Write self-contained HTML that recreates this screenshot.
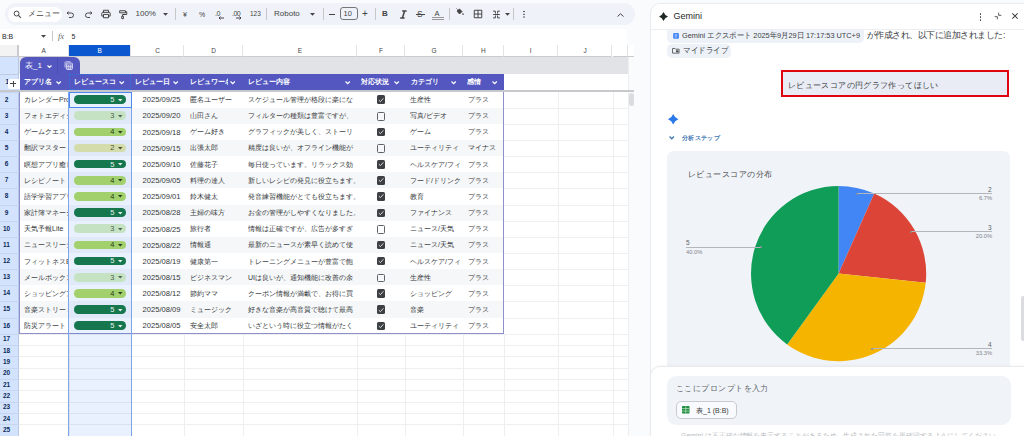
<!DOCTYPE html><html><head><meta charset="utf-8"><style>
*{box-sizing:border-box;margin:0;padding:0}
html,body{width:1024px;height:436px;overflow:hidden;background:#f9fbfd;font-family:"Liberation Sans",sans-serif;color:#1f1f1f}
.a{position:absolute}
.t{position:absolute;white-space:nowrap;line-height:1}
svg{position:absolute;overflow:visible}
</style></head><body>

<div class="a" style="left:5px;top:3px;width:630px;height:22px;border-radius:11px;background:#eff3f9"></div>
<div class="a" style="left:8px;top:6.5px;width:54px;height:15px;border-radius:7.5px;background:#fff"></div>
<svg style="left:13px;top:10px" width="9" height="9" viewBox="0 0 24 24"><circle cx="9.5" cy="9.5" r="6.5" fill="none" stroke="#444" stroke-width="2.6"/><path d="M14.5 14.5 L21 21" stroke="#444" stroke-width="2.8"/></svg>
<div class="t" style="left:28px;top:10px;font-size:7.5px;color:#444">メニュー</div>
<svg style="left:66px;top:10px" width="9" height="9" viewBox="0 0 24 24"><path d="M7 4 L3 8 L7 12 M3 8 H14 a6 6 0 0 1 0 12 H8" fill="none" stroke="#444" stroke-width="2.6"/></svg>
<svg style="left:84px;top:10px" width="9" height="9" viewBox="0 0 24 24"><path d="M17 4 L21 8 L17 12 M21 8 H10 a6 6 0 0 0 0 12 H16" fill="none" stroke="#444" stroke-width="2.6"/></svg>
<svg style="left:101px;top:9px" width="10" height="10" viewBox="0 0 24 24"><path d="M6 8 V3 H18 V8 M4 8 H20 a2 2 0 0 1 2 2 V17 H18 M6 17 H2 V10 a2 2 0 0 1 2 -2 M6 13 H18 V21 H6 Z" fill="none" stroke="#444" stroke-width="2.4"/></svg>
<svg style="left:118px;top:9px" width="10" height="11" viewBox="0 0 24 24"><path d="M4 3 H18 V8 H4 Z M18 5.5 H21 V12 H11 V16 M9 16 H13 V22 H9 Z" fill="none" stroke="#444" stroke-width="2.4"/></svg>
<div class="t" style="left:135.5px;top:10px;font-size:8px;color:#444">100%</div>
<svg style="left:163px;top:12.5px" width="5" height="3" viewBox="0 0 10 6"><path d="M0 0 H10 L5 5.5 Z" fill="#444"/></svg>
<div class="a" style="left:174.5px;top:8px;width:1px;height:12px;background:#c7c7c7"></div>
<div class="t" style="left:183px;top:10.5px;font-size:7px;color:#444">¥</div>
<div class="t" style="left:199px;top:10.5px;font-size:7px;color:#444">%</div>
<div class="t" style="left:215px;top:9.5px;font-size:7px;color:#444;letter-spacing:-0.5px">.0</div>
<svg style="left:218px;top:16px" width="6" height="4" viewBox="0 0 12 8"><path d="M12 4 H2 M5 1 L2 4 L5 7" fill="none" stroke="#444" stroke-width="2"/></svg>
<div class="t" style="left:232px;top:9.5px;font-size:7px;color:#444;letter-spacing:-0.5px">.00</div>
<svg style="left:236px;top:16px" width="6" height="4" viewBox="0 0 12 8"><path d="M0 4 H10 M7 1 L10 4 L7 7" fill="none" stroke="#444" stroke-width="2"/></svg>
<div class="t" style="left:250px;top:10.5px;font-size:6.5px;color:#444">123</div>
<div class="a" style="left:265.5px;top:8px;width:1px;height:12px;background:#c7c7c7"></div>
<div class="t" style="left:274px;top:10px;font-size:8px;color:#444">Roboto</div>
<svg style="left:310px;top:12.5px" width="5" height="3" viewBox="0 0 10 6"><path d="M0 0 H10 L5 5.5 Z" fill="#444"/></svg>
<div class="a" style="left:322.5px;top:8px;width:1px;height:12px;background:#c7c7c7"></div>
<div class="a" style="left:329px;top:13.5px;width:6px;height:1.2px;background:#444"></div>
<div class="a" style="left:339.5px;top:7px;width:18px;height:13px;border:1px solid #747775;border-radius:3px"></div>
<div class="t" style="left:343.5px;top:10px;font-size:7.5px;color:#444">10</div>
<div class="t" style="left:362px;top:8.5px;font-size:10px;color:#444">+</div>
<div class="a" style="left:375px;top:8px;width:1px;height:12px;background:#c7c7c7"></div>
<div class="t" style="left:382px;top:10px;font-size:8px;font-weight:bold;color:#444">B</div>
<svg style="left:399px;top:10px" width="9" height="9" viewBox="0 0 9 9"><path d="M3.2 1 H7.6 M1.2 8 H5.6 M5.6 1 L3.4 8" fill="none" stroke="#444" stroke-width="1.5"/></svg>
<div class="t" style="left:417px;top:9.6px;font-size:8.5px;color:#444">S</div>
<div class="a" style="left:415.5px;top:13.6px;width:9px;height:1px;background:#444"></div>
<div class="t" style="left:434.5px;top:10px;font-size:7.5px;color:#444">A</div>
<div class="a" style="left:432px;top:17.3px;width:12px;height:0.9px;background:#999"></div>
<div class="a" style="left:432px;top:18.9px;width:12px;height:0.9px;background:#999"></div>
<div class="a" style="left:449px;top:8px;width:1px;height:12px;background:#c7c7c7"></div>
<svg style="left:455px;top:8.3px" width="9" height="7.5" viewBox="0 0 18 15"><path d="M3 1 L5 3 M4 6 L9 2 L14 7 L9 12 Z" fill="#444" stroke="#444" stroke-width="1.8" stroke-linejoin="round"/><circle cx="16" cy="12" r="1.7" fill="#444"/></svg>
<svg style="left:473px;top:9px" width="10" height="10" viewBox="0 0 24 24"><path d="M3 3 H21 V21 H3 Z M12 3 V21 M3 12 H21" fill="none" stroke="#444" stroke-width="2.4"/></svg>
<svg style="left:491.5px;top:9.5px" width="9" height="9" viewBox="0 0 24 24"><path d="M3 3 H9 V8 M15 8 V3 H21 M3 21 H9 V16 M15 16 V21 H21 M3 12 H21 M9 9.5 L12 12 L9 14.5 M15 9.5 L12 12 L15 14.5" fill="none" stroke="#444" stroke-width="2.6"/></svg>
<svg style="left:504.5px;top:12.5px" width="5" height="3" viewBox="0 0 10 6"><path d="M0 0 H10 L5 5.5 Z" fill="#444"/></svg>
<div class="a" style="left:513px;top:8px;width:1px;height:12px;background:#c7c7c7"></div>
<div class="a" style="left:523px;top:10.6px;width:1.9px;height:1.9px;background:#444;border-radius:1px;box-shadow:0 2.7px 0 #444,0 5.4px 0 #444"></div>
<svg style="left:617px;top:12.8px" width="7" height="4" viewBox="0 0 14 8"><path d="M1 7 L7 1.5 L13 7" fill="none" stroke="#444" stroke-width="2"/></svg>
<div class="a" style="left:0;top:29px;width:627px;height:16px;background:#fff"></div>
<div class="t" style="left:2px;top:32.5px;font-size:7px;color:#1f1f1f">B:B</div>
<svg style="left:40.5px;top:35px" width="5" height="3" viewBox="0 0 10 6"><path d="M0 0 H10 L5 5.5 Z" fill="#444"/></svg>
<div class="a" style="left:51.5px;top:31px;width:1px;height:10px;background:#c7c7c7"></div>
<div class="t" style="left:58px;top:31.5px;font-size:8.5px;font-style:italic;font-family:'Liberation Serif';color:#666">fx</div>
<div class="t" style="left:71.5px;top:32.5px;font-size:7px;color:#1f1f1f">5</div>
<div class="a" style="left:0;top:44.5px;width:628px;height:391.5px;background:#fff;overflow:hidden" id="grid">
<div class="a" style="left:0;top:0;width:19px;height:12.5px;background:#f3f3f3;border-right:2px solid #c9cbcf;border-bottom:1px solid #c9cbcf"></div>
<div class="a" style="left:19px;top:0;width:49.5px;height:12.5px;background:#fff;border-right:1px solid #e1e3e6;border-bottom:1px solid #c9cbcf"></div>
<div class="t" style="left:19px;width:49.5px;text-align:center;top:3.3px;font-size:6.5px;color:#444">A</div>
<div class="a" style="left:68.5px;top:0;width:62.5px;height:12.5px;background:#0b57d0;border-right:1px solid #e1e3e6;border-bottom:1px solid #c9cbcf"></div>
<div class="t" style="left:68.5px;width:62.5px;text-align:center;top:3.3px;font-size:6.5px;color:#fff">B</div>
<div class="a" style="left:131px;top:0;width:53px;height:12.5px;background:#fff;border-right:1px solid #e1e3e6;border-bottom:1px solid #c9cbcf"></div>
<div class="t" style="left:131px;width:53px;text-align:center;top:3.3px;font-size:6.5px;color:#444">C</div>
<div class="a" style="left:184px;top:0;width:59px;height:12.5px;background:#fff;border-right:1px solid #e1e3e6;border-bottom:1px solid #c9cbcf"></div>
<div class="t" style="left:184px;width:59px;text-align:center;top:3.3px;font-size:6.5px;color:#444">D</div>
<div class="a" style="left:243px;top:0;width:114px;height:12.5px;background:#fff;border-right:1px solid #e1e3e6;border-bottom:1px solid #c9cbcf"></div>
<div class="t" style="left:243px;width:114px;text-align:center;top:3.3px;font-size:6.5px;color:#444">E</div>
<div class="a" style="left:357px;top:0;width:48px;height:12.5px;background:#fff;border-right:1px solid #e1e3e6;border-bottom:1px solid #c9cbcf"></div>
<div class="t" style="left:357px;width:48px;text-align:center;top:3.3px;font-size:6.5px;color:#444">F</div>
<div class="a" style="left:405px;top:0;width:58px;height:12.5px;background:#fff;border-right:1px solid #e1e3e6;border-bottom:1px solid #c9cbcf"></div>
<div class="t" style="left:405px;width:58px;text-align:center;top:3.3px;font-size:6.5px;color:#444">G</div>
<div class="a" style="left:463px;top:0;width:40.5px;height:12.5px;background:#fff;border-right:1px solid #e1e3e6;border-bottom:1px solid #c9cbcf"></div>
<div class="t" style="left:463px;width:40.5px;text-align:center;top:3.3px;font-size:6.5px;color:#444">H</div>
<div class="a" style="left:503.5px;top:0;width:54.200000000000045px;height:12.5px;background:#fff;border-right:1px solid #e1e3e6;border-bottom:1px solid #c9cbcf"></div>
<div class="t" style="left:503.5px;width:54.200000000000045px;text-align:center;top:3.3px;font-size:6.5px;color:#444">I</div>
<div class="a" style="left:557.7px;top:0;width:54.799999999999955px;height:12.5px;background:#fff;border-right:1px solid #e1e3e6;border-bottom:1px solid #c9cbcf"></div>
<div class="t" style="left:557.7px;width:54.799999999999955px;text-align:center;top:3.3px;font-size:6.5px;color:#444">J</div>
<div class="a" style="left:612.5px;top:0;width:15.5px;height:12.5px;background:#fff;border-right:1px solid #e1e3e6;border-bottom:1px solid #c9cbcf"></div>
<div class="a" style="left:0;top:12.5px;width:19px;height:379px;background:#d3e3fd;border-right:1px solid #b7c7e6"></div>
<div class="a" style="left:0;top:29.0px;width:19px;height:1px;background:#bfcbe0"></div>
<div class="t" style="left:0.8px;width:13px;text-align:center;top:34.0px;font-size:6.5px;font-weight:bold;color:#0b2a5c">1</div>
<div class="a" style="left:0;top:47.0px;width:19px;height:0;border-top:1px solid #c6d6f0"></div>
<div class="t" style="left:0;width:13px;text-align:center;top:52.0px;font-size:6.5px;font-weight:bold;color:#0b2a5c">2</div>
<div class="a" style="left:0;top:63.150000000000006px;width:19px;height:0;border-top:1px solid #c6d6f0"></div>
<div class="t" style="left:0;width:13px;text-align:center;top:68.15px;font-size:6.5px;font-weight:bold;color:#0b2a5c">3</div>
<div class="a" style="left:0;top:79.3px;width:19px;height:0;border-top:1px solid #c6d6f0"></div>
<div class="t" style="left:0;width:13px;text-align:center;top:84.3px;font-size:6.5px;font-weight:bold;color:#0b2a5c">4</div>
<div class="a" style="left:0;top:95.44999999999999px;width:19px;height:0;border-top:1px solid #c6d6f0"></div>
<div class="t" style="left:0;width:13px;text-align:center;top:100.44999999999999px;font-size:6.5px;font-weight:bold;color:#0b2a5c">5</div>
<div class="a" style="left:0;top:111.6px;width:19px;height:0;border-top:1px solid #c6d6f0"></div>
<div class="t" style="left:0;width:13px;text-align:center;top:116.6px;font-size:6.5px;font-weight:bold;color:#0b2a5c">6</div>
<div class="a" style="left:0;top:127.75px;width:19px;height:0;border-top:1px solid #c6d6f0"></div>
<div class="t" style="left:0;width:13px;text-align:center;top:132.75px;font-size:6.5px;font-weight:bold;color:#0b2a5c">7</div>
<div class="a" style="left:0;top:143.89999999999998px;width:19px;height:0;border-top:1px solid #c6d6f0"></div>
<div class="t" style="left:0;width:13px;text-align:center;top:148.89999999999998px;font-size:6.5px;font-weight:bold;color:#0b2a5c">8</div>
<div class="a" style="left:0;top:160.04999999999998px;width:19px;height:0;border-top:1px solid #c6d6f0"></div>
<div class="t" style="left:0;width:13px;text-align:center;top:165.04999999999998px;font-size:6.5px;font-weight:bold;color:#0b2a5c">9</div>
<div class="a" style="left:0;top:176.2px;width:19px;height:0;border-top:1px solid #c6d6f0"></div>
<div class="t" style="left:0;width:13px;text-align:center;top:181.2px;font-size:6.5px;font-weight:bold;color:#0b2a5c">10</div>
<div class="a" style="left:0;top:192.35px;width:19px;height:0;border-top:1px solid #c6d6f0"></div>
<div class="t" style="left:0;width:13px;text-align:center;top:197.35px;font-size:6.5px;font-weight:bold;color:#0b2a5c">11</div>
<div class="a" style="left:0;top:208.5px;width:19px;height:0;border-top:1px solid #c6d6f0"></div>
<div class="t" style="left:0;width:13px;text-align:center;top:213.5px;font-size:6.5px;font-weight:bold;color:#0b2a5c">12</div>
<div class="a" style="left:0;top:224.64999999999998px;width:19px;height:0;border-top:1px solid #c6d6f0"></div>
<div class="t" style="left:0;width:13px;text-align:center;top:229.64999999999998px;font-size:6.5px;font-weight:bold;color:#0b2a5c">13</div>
<div class="a" style="left:0;top:240.79999999999995px;width:19px;height:0;border-top:1px solid #c6d6f0"></div>
<div class="t" style="left:0;width:13px;text-align:center;top:245.79999999999995px;font-size:6.5px;font-weight:bold;color:#0b2a5c">14</div>
<div class="a" style="left:0;top:256.95px;width:19px;height:0;border-top:1px solid #c6d6f0"></div>
<div class="t" style="left:0;width:13px;text-align:center;top:261.95px;font-size:6.5px;font-weight:bold;color:#0b2a5c">15</div>
<div class="a" style="left:0;top:273.09999999999997px;width:19px;height:0;border-top:1px solid #c6d6f0"></div>
<div class="t" style="left:0;width:13px;text-align:center;top:278.09999999999997px;font-size:6.5px;font-weight:bold;color:#0b2a5c">16</div>
<div class="a" style="left:0;top:289.25px;width:19px;height:0;border-top:1px solid #c6d6f0"></div>
<div class="t" style="left:0;width:13px;text-align:center;top:291.75px;font-size:6.5px;font-weight:bold;color:#0b2a5c">17</div>
<div class="a" style="left:0;top:300.58px;width:19px;height:0;border-top:1px solid #c6d6f0"></div>
<div class="t" style="left:0;width:13px;text-align:center;top:303.08px;font-size:6.5px;font-weight:bold;color:#0b2a5c">18</div>
<div class="a" style="left:0;top:311.91px;width:19px;height:0;border-top:1px solid #c6d6f0"></div>
<div class="t" style="left:0;width:13px;text-align:center;top:314.41px;font-size:6.5px;font-weight:bold;color:#0b2a5c">19</div>
<div class="a" style="left:0;top:323.24px;width:19px;height:0;border-top:1px solid #c6d6f0"></div>
<div class="t" style="left:0;width:13px;text-align:center;top:325.74px;font-size:6.5px;font-weight:bold;color:#0b2a5c">20</div>
<div class="a" style="left:0;top:334.57px;width:19px;height:0;border-top:1px solid #c6d6f0"></div>
<div class="t" style="left:0;width:13px;text-align:center;top:337.07px;font-size:6.5px;font-weight:bold;color:#0b2a5c">21</div>
<div class="a" style="left:0;top:345.9px;width:19px;height:0;border-top:1px solid #c6d6f0"></div>
<div class="t" style="left:0;width:13px;text-align:center;top:348.4px;font-size:6.5px;font-weight:bold;color:#0b2a5c">22</div>
<div class="a" style="left:0;top:357.23px;width:19px;height:0;border-top:1px solid #c6d6f0"></div>
<div class="t" style="left:0;width:13px;text-align:center;top:359.73px;font-size:6.5px;font-weight:bold;color:#0b2a5c">23</div>
<div class="a" style="left:0;top:368.56px;width:19px;height:0;border-top:1px solid #c6d6f0"></div>
<div class="t" style="left:0;width:13px;text-align:center;top:371.06px;font-size:6.5px;font-weight:bold;color:#0b2a5c">24</div>
<div class="a" style="left:0;top:379.89px;width:19px;height:0;border-top:1px solid #c6d6f0"></div>
<div class="t" style="left:0;width:13px;text-align:center;top:382.39px;font-size:6.5px;font-weight:bold;color:#0b2a5c">25</div>
<div class="a" style="left:0;top:391.22px;width:19px;height:0;border-top:1px solid #c6d6f0"></div>
<div class="t" style="left:0;width:13px;text-align:center;top:393.72px;font-size:6.5px;font-weight:bold;color:#0b2a5c">26</div>
<div class="a" style="left:19px;top:12.5px;width:609px;height:17px;background:#e1e3e6"></div>
<div class="a" style="left:19.5px;top:12.5px;width:60.5px;height:17px;background:#5357bf;border-radius:6px 6px 0 0"></div>
<div class="a" style="left:56.8px;top:13.5px;width:1.3px;height:16px;background:#4a4eb2"></div>
<div class="t" style="left:25px;top:17.0px;font-size:8px;color:#fff">表_1</div>
<svg style="left:46.5px;top:20.0px" width="5" height="3.0" viewBox="0 0 10 6"><path d="M1 1 L5 5 L9 1" fill="none" stroke="#fff" stroke-width="2.3"/></svg>
<svg style="left:64px;top:16.700000000000003px" width="9.2" height="9" viewBox="0 0 24 24"><path d="M2.5 17 V4 a2 2 0 0 1 2 -2 H17" fill="none" stroke="#e8e9f8" stroke-width="2"/><rect x="6" y="5.5" width="16" height="17" rx="2" fill="none" stroke="#f2f2fb" stroke-width="2.2"/><path d="M6 10.5 H22 M6 14.5 H22 M6 18.5 H22 M11.3 10.5 V22.5 M16.6 10.5 V22.5" stroke="#f2f2fb" stroke-width="1.6"/></svg>
<div class="a" style="left:19.5px;top:29.5px;width:484.0px;height:16.0px;background:#5357bf"></div>
<div class="t" style="left:24px;top:33.1px;font-size:7px;font-weight:bold;color:#fff">アプリ名</div>
<div class="a" style="left:54px;top:32.5px;width:9px;height:10px;background:#5357bf"></div>
<svg style="left:56.3px;top:36.7px" width="5.4" height="3.24" viewBox="0 0 10 6"><path d="M1 1 L5 5 L9 1" fill="none" stroke="#fff" stroke-width="2.3"/></svg>
<div class="t" style="left:74px;top:33.1px;font-size:7px;font-weight:bold;color:#fff">レビュースコ</div>
<div class="a" style="left:116.5px;top:32.5px;width:9px;height:10px;background:#5357bf"></div>
<svg style="left:118.8px;top:36.7px" width="5.4" height="3.24" viewBox="0 0 10 6"><path d="M1 1 L5 5 L9 1" fill="none" stroke="#fff" stroke-width="2.3"/></svg>
<div class="t" style="left:135px;top:33.1px;font-size:7px;font-weight:bold;color:#fff">レビュー日</div>
<div class="a" style="left:170.2px;top:32.5px;width:9px;height:10px;background:#5357bf"></div>
<svg style="left:172.5px;top:36.7px" width="5.4" height="3.24" viewBox="0 0 10 6"><path d="M1 1 L5 5 L9 1" fill="none" stroke="#fff" stroke-width="2.3"/></svg>
<div class="t" style="left:190px;top:33.1px;font-size:7px;font-weight:bold;color:#fff">レビュワー名</div>
<div class="a" style="left:227.5px;top:32.5px;width:9px;height:10px;background:#5357bf"></div>
<svg style="left:229.8px;top:36.7px" width="5.4" height="3.24" viewBox="0 0 10 6"><path d="M1 1 L5 5 L9 1" fill="none" stroke="#fff" stroke-width="2.3"/></svg>
<div class="t" style="left:248px;top:33.1px;font-size:7px;font-weight:bold;color:#fff">レビュー内容</div>
<div class="a" style="left:342.5px;top:32.5px;width:9px;height:10px;background:#5357bf"></div>
<svg style="left:344.8px;top:36.7px" width="5.4" height="3.24" viewBox="0 0 10 6"><path d="M1 1 L5 5 L9 1" fill="none" stroke="#fff" stroke-width="2.3"/></svg>
<div class="t" style="left:360.8px;top:33.1px;font-size:7px;font-weight:bold;color:#fff">対応状況</div>
<div class="a" style="left:391.8px;top:32.5px;width:9px;height:10px;background:#5357bf"></div>
<svg style="left:394.1px;top:36.7px" width="5.4" height="3.24" viewBox="0 0 10 6"><path d="M1 1 L5 5 L9 1" fill="none" stroke="#fff" stroke-width="2.3"/></svg>
<div class="t" style="left:410.6px;top:33.1px;font-size:7px;font-weight:bold;color:#fff">カテゴリ</div>
<div class="a" style="left:448.8px;top:32.5px;width:9px;height:10px;background:#5357bf"></div>
<svg style="left:451.1px;top:36.7px" width="5.4" height="3.24" viewBox="0 0 10 6"><path d="M1 1 L5 5 L9 1" fill="none" stroke="#fff" stroke-width="2.3"/></svg>
<div class="t" style="left:467px;top:33.1px;font-size:7px;font-weight:bold;color:#fff">感情</div>
<div class="a" style="left:489.8px;top:32.5px;width:9px;height:10px;background:#5357bf"></div>
<svg style="left:492.1px;top:36.7px" width="5.4" height="3.24" viewBox="0 0 10 6"><path d="M1 1 L5 5 L9 1" fill="none" stroke="#fff" stroke-width="2.3"/></svg>
<div class="a" style="left:69px;top:29.5px;width:62px;height:16.0px;border:1px dotted #2f74e6"></div>
<div class="a" style="left:0px;top:45.099999999999994px;width:628px;height:2.5px;background:#c6c8cb"></div>
<div class="a" style="left:8px;top:34.5px;width:11px;height:9.7px;background:#fff;border-radius:2px 0 0 2px"></div>
<div class="a" style="left:10.3px;top:38.8px;width:6px;height:1px;background:#444"></div>
<div class="a" style="left:12.8px;top:36.3px;width:1px;height:6px;background:#444"></div>
<div class="a" style="left:19.5px;top:47.0px;width:483.5px;height:16.349999999999998px;background:#fff"></div>
<div class="t" style="left:24px;top:51.5px;width:45px;overflow:hidden;font-size:7px;color:#34373b">カレンダーPro</div>
<div class="t" style="left:142.5px;top:51.8px;font-size:7.6px;color:#34373b">2025/09/25</div>
<div class="t" style="left:190px;top:51.5px;width:53px;overflow:hidden;font-size:7px;color:#34373b">匿名ユーザー</div>
<div class="t" style="left:248px;top:51.5px;width:109px;overflow:hidden;font-size:7px;color:#34373b">スケジュール管理が格段に楽にな</div>
<div class="t" style="left:410px;top:51.5px;width:53px;overflow:hidden;font-size:7px;color:#34373b">生産性</div>
<div class="t" style="left:467.5px;top:51.5px;font-size:7px;color:#34373b">プラス</div>
<div class="a" style="left:376.6px;top:50.975px;width:8.5px;height:8.5px;background:#3c4043;border-radius:1.5px"></div>
<svg style="left:377.8px;top:52.075px" width="6.2" height="6.2" viewBox="0 0 24 24"><path d="M3 12 L9.5 18 L21 5" fill="none" stroke="#fff" stroke-width="3"/></svg>
<div class="a" style="left:19.5px;top:63.150000000000006px;width:483.5px;height:16.349999999999998px;background:#f6f7f9"></div>
<div class="t" style="left:24px;top:67.65px;width:45px;overflow:hidden;font-size:7px;color:#34373b">フォトエディター</div>
<div class="t" style="left:142.5px;top:67.95px;font-size:7.6px;color:#34373b">2025/09/20</div>
<div class="t" style="left:190px;top:67.65px;width:53px;overflow:hidden;font-size:7px;color:#34373b">山田さん</div>
<div class="t" style="left:248px;top:67.65px;width:109px;overflow:hidden;font-size:7px;color:#34373b">フィルターの種類は豊富ですが、</div>
<div class="t" style="left:410px;top:67.65px;width:53px;overflow:hidden;font-size:7px;color:#34373b">写真/ビデオ</div>
<div class="t" style="left:467.5px;top:67.65px;font-size:7px;color:#34373b">プラス</div>
<div class="a" style="left:376.6px;top:67.525px;width:8.5px;height:8.7px;border:1.5px solid #5f6368;border-radius:1.5px"></div>
<div class="a" style="left:19.5px;top:79.3px;width:483.5px;height:16.349999999999998px;background:#fff"></div>
<div class="t" style="left:24px;top:83.8px;width:45px;overflow:hidden;font-size:7px;color:#34373b">ゲームクエスト</div>
<div class="t" style="left:142.5px;top:84.1px;font-size:7.6px;color:#34373b">2025/09/18</div>
<div class="t" style="left:190px;top:83.8px;width:53px;overflow:hidden;font-size:7px;color:#34373b">ゲーム好き</div>
<div class="t" style="left:248px;top:83.8px;width:109px;overflow:hidden;font-size:7px;color:#34373b">グラフィックが美しく、ストーリ</div>
<div class="t" style="left:410px;top:83.8px;width:53px;overflow:hidden;font-size:7px;color:#34373b">ゲーム</div>
<div class="t" style="left:467.5px;top:83.8px;font-size:7px;color:#34373b">プラス</div>
<div class="a" style="left:376.6px;top:83.275px;width:8.5px;height:8.5px;background:#3c4043;border-radius:1.5px"></div>
<svg style="left:377.8px;top:84.375px" width="6.2" height="6.2" viewBox="0 0 24 24"><path d="M3 12 L9.5 18 L21 5" fill="none" stroke="#fff" stroke-width="3"/></svg>
<div class="a" style="left:19.5px;top:95.44999999999999px;width:483.5px;height:16.349999999999998px;background:#f6f7f9"></div>
<div class="t" style="left:24px;top:99.94999999999999px;width:45px;overflow:hidden;font-size:7px;color:#34373b">翻訳マスター</div>
<div class="t" style="left:142.5px;top:100.24999999999999px;font-size:7.6px;color:#34373b">2025/09/15</div>
<div class="t" style="left:190px;top:99.94999999999999px;width:53px;overflow:hidden;font-size:7px;color:#34373b">出張太郎</div>
<div class="t" style="left:248px;top:99.94999999999999px;width:109px;overflow:hidden;font-size:7px;color:#34373b">精度は良いが、オフライン機能が</div>
<div class="t" style="left:410px;top:99.94999999999999px;width:53px;overflow:hidden;font-size:7px;color:#34373b">ユーティリティ</div>
<div class="t" style="left:467.5px;top:99.94999999999999px;font-size:7px;color:#34373b">マイナス</div>
<div class="a" style="left:376.6px;top:99.82499999999999px;width:8.5px;height:8.7px;border:1.5px solid #5f6368;border-radius:1.5px"></div>
<div class="a" style="left:19.5px;top:111.6px;width:483.5px;height:16.349999999999998px;background:#fff"></div>
<div class="t" style="left:24px;top:116.1px;width:45px;overflow:hidden;font-size:7px;color:#34373b">瞑想アプリ癒し</div>
<div class="t" style="left:142.5px;top:116.39999999999999px;font-size:7.6px;color:#34373b">2025/09/10</div>
<div class="t" style="left:190px;top:116.1px;width:53px;overflow:hidden;font-size:7px;color:#34373b">佐藤花子</div>
<div class="t" style="left:248px;top:116.1px;width:109px;overflow:hidden;font-size:7px;color:#34373b">毎日使っています。リラックス効</div>
<div class="t" style="left:410px;top:116.1px;width:53px;overflow:hidden;font-size:7px;color:#34373b">ヘルスケア/フィ</div>
<div class="t" style="left:467.5px;top:116.1px;font-size:7px;color:#34373b">プラス</div>
<div class="a" style="left:376.6px;top:115.575px;width:8.5px;height:8.5px;background:#3c4043;border-radius:1.5px"></div>
<svg style="left:377.8px;top:116.675px" width="6.2" height="6.2" viewBox="0 0 24 24"><path d="M3 12 L9.5 18 L21 5" fill="none" stroke="#fff" stroke-width="3"/></svg>
<div class="a" style="left:19.5px;top:127.75px;width:483.5px;height:16.349999999999998px;background:#f6f7f9"></div>
<div class="t" style="left:24px;top:132.25px;width:45px;overflow:hidden;font-size:7px;color:#34373b">レシピノート</div>
<div class="t" style="left:142.5px;top:132.55px;font-size:7.6px;color:#34373b">2025/09/05</div>
<div class="t" style="left:190px;top:132.25px;width:53px;overflow:hidden;font-size:7px;color:#34373b">料理の達人</div>
<div class="t" style="left:248px;top:132.25px;width:109px;overflow:hidden;font-size:7px;color:#34373b">新しいレシピの発見に役立ちます。</div>
<div class="t" style="left:410px;top:132.25px;width:53px;overflow:hidden;font-size:7px;color:#34373b">フード/ドリンク</div>
<div class="t" style="left:467.5px;top:132.25px;font-size:7px;color:#34373b">プラス</div>
<div class="a" style="left:376.6px;top:131.725px;width:8.5px;height:8.5px;background:#3c4043;border-radius:1.5px"></div>
<svg style="left:377.8px;top:132.825px" width="6.2" height="6.2" viewBox="0 0 24 24"><path d="M3 12 L9.5 18 L21 5" fill="none" stroke="#fff" stroke-width="3"/></svg>
<div class="a" style="left:19.5px;top:143.89999999999998px;width:483.5px;height:16.349999999999998px;background:#fff"></div>
<div class="t" style="left:24px;top:148.39999999999998px;width:45px;overflow:hidden;font-size:7px;color:#34373b">語学学習アプリ</div>
<div class="t" style="left:142.5px;top:148.7px;font-size:7.6px;color:#34373b">2025/09/01</div>
<div class="t" style="left:190px;top:148.39999999999998px;width:53px;overflow:hidden;font-size:7px;color:#34373b">鈴木健太</div>
<div class="t" style="left:248px;top:148.39999999999998px;width:109px;overflow:hidden;font-size:7px;color:#34373b">発音練習機能がとても役立ちます。</div>
<div class="t" style="left:410px;top:148.39999999999998px;width:53px;overflow:hidden;font-size:7px;color:#34373b">教育</div>
<div class="t" style="left:467.5px;top:148.39999999999998px;font-size:7px;color:#34373b">プラス</div>
<div class="a" style="left:376.6px;top:147.87499999999997px;width:8.5px;height:8.5px;background:#3c4043;border-radius:1.5px"></div>
<svg style="left:377.8px;top:148.97499999999997px" width="6.2" height="6.2" viewBox="0 0 24 24"><path d="M3 12 L9.5 18 L21 5" fill="none" stroke="#fff" stroke-width="3"/></svg>
<div class="a" style="left:19.5px;top:160.04999999999998px;width:483.5px;height:16.349999999999998px;background:#f6f7f9"></div>
<div class="t" style="left:24px;top:164.54999999999998px;width:45px;overflow:hidden;font-size:7px;color:#34373b">家計簿マネージャー</div>
<div class="t" style="left:142.5px;top:164.85px;font-size:7.6px;color:#34373b">2025/08/28</div>
<div class="t" style="left:190px;top:164.54999999999998px;width:53px;overflow:hidden;font-size:7px;color:#34373b">主婦の味方</div>
<div class="t" style="left:248px;top:164.54999999999998px;width:109px;overflow:hidden;font-size:7px;color:#34373b">お金の管理がしやすくなりました。</div>
<div class="t" style="left:410px;top:164.54999999999998px;width:53px;overflow:hidden;font-size:7px;color:#34373b">ファイナンス</div>
<div class="t" style="left:467.5px;top:164.54999999999998px;font-size:7px;color:#34373b">プラス</div>
<div class="a" style="left:376.6px;top:164.02499999999998px;width:8.5px;height:8.5px;background:#3c4043;border-radius:1.5px"></div>
<svg style="left:377.8px;top:165.12499999999997px" width="6.2" height="6.2" viewBox="0 0 24 24"><path d="M3 12 L9.5 18 L21 5" fill="none" stroke="#fff" stroke-width="3"/></svg>
<div class="a" style="left:19.5px;top:176.2px;width:483.5px;height:16.349999999999998px;background:#fff"></div>
<div class="t" style="left:24px;top:180.7px;width:45px;overflow:hidden;font-size:7px;color:#34373b">天気予報Lite</div>
<div class="t" style="left:142.5px;top:181.0px;font-size:7.6px;color:#34373b">2025/08/25</div>
<div class="t" style="left:190px;top:180.7px;width:53px;overflow:hidden;font-size:7px;color:#34373b">旅行者</div>
<div class="t" style="left:248px;top:180.7px;width:109px;overflow:hidden;font-size:7px;color:#34373b">情報は正確ですが、広告が多すぎ</div>
<div class="t" style="left:410px;top:180.7px;width:53px;overflow:hidden;font-size:7px;color:#34373b">ニュース/天気</div>
<div class="t" style="left:467.5px;top:180.7px;font-size:7px;color:#34373b">プラス</div>
<div class="a" style="left:376.6px;top:180.575px;width:8.5px;height:8.7px;border:1.5px solid #5f6368;border-radius:1.5px"></div>
<div class="a" style="left:19.5px;top:192.35px;width:483.5px;height:16.349999999999998px;background:#f6f7f9"></div>
<div class="t" style="left:24px;top:196.85px;width:45px;overflow:hidden;font-size:7px;color:#34373b">ニュースリーダー</div>
<div class="t" style="left:142.5px;top:197.15px;font-size:7.6px;color:#34373b">2025/08/22</div>
<div class="t" style="left:190px;top:196.85px;width:53px;overflow:hidden;font-size:7px;color:#34373b">情報通</div>
<div class="t" style="left:248px;top:196.85px;width:109px;overflow:hidden;font-size:7px;color:#34373b">最新のニュースが素早く読めて便</div>
<div class="t" style="left:410px;top:196.85px;width:53px;overflow:hidden;font-size:7px;color:#34373b">ニュース/天気</div>
<div class="t" style="left:467.5px;top:196.85px;font-size:7px;color:#34373b">プラス</div>
<div class="a" style="left:376.6px;top:196.325px;width:8.5px;height:8.5px;background:#3c4043;border-radius:1.5px"></div>
<svg style="left:377.8px;top:197.42499999999998px" width="6.2" height="6.2" viewBox="0 0 24 24"><path d="M3 12 L9.5 18 L21 5" fill="none" stroke="#fff" stroke-width="3"/></svg>
<div class="a" style="left:19.5px;top:208.5px;width:483.5px;height:16.349999999999998px;background:#fff"></div>
<div class="t" style="left:24px;top:213.0px;width:45px;overflow:hidden;font-size:7px;color:#34373b">フィットネスBody</div>
<div class="t" style="left:142.5px;top:213.3px;font-size:7.6px;color:#34373b">2025/08/19</div>
<div class="t" style="left:190px;top:213.0px;width:53px;overflow:hidden;font-size:7px;color:#34373b">健康第一</div>
<div class="t" style="left:248px;top:213.0px;width:109px;overflow:hidden;font-size:7px;color:#34373b">トレーニングメニューが豊富で飽</div>
<div class="t" style="left:410px;top:213.0px;width:53px;overflow:hidden;font-size:7px;color:#34373b">ヘルスケア/フィ</div>
<div class="t" style="left:467.5px;top:213.0px;font-size:7px;color:#34373b">プラス</div>
<div class="a" style="left:376.6px;top:212.475px;width:8.5px;height:8.5px;background:#3c4043;border-radius:1.5px"></div>
<svg style="left:377.8px;top:213.575px" width="6.2" height="6.2" viewBox="0 0 24 24"><path d="M3 12 L9.5 18 L21 5" fill="none" stroke="#fff" stroke-width="3"/></svg>
<div class="a" style="left:19.5px;top:224.64999999999998px;width:483.5px;height:16.349999999999998px;background:#f6f7f9"></div>
<div class="t" style="left:24px;top:229.14999999999998px;width:45px;overflow:hidden;font-size:7px;color:#34373b">メールボックス</div>
<div class="t" style="left:142.5px;top:229.45px;font-size:7.6px;color:#34373b">2025/08/15</div>
<div class="t" style="left:190px;top:229.14999999999998px;width:53px;overflow:hidden;font-size:7px;color:#34373b">ビジネスマン</div>
<div class="t" style="left:248px;top:229.14999999999998px;width:109px;overflow:hidden;font-size:7px;color:#34373b">UIは良いが、通知機能に改善の余</div>
<div class="t" style="left:410px;top:229.14999999999998px;width:53px;overflow:hidden;font-size:7px;color:#34373b">生産性</div>
<div class="t" style="left:467.5px;top:229.14999999999998px;font-size:7px;color:#34373b">プラス</div>
<div class="a" style="left:376.6px;top:229.02499999999998px;width:8.5px;height:8.7px;border:1.5px solid #5f6368;border-radius:1.5px"></div>
<div class="a" style="left:19.5px;top:240.79999999999995px;width:483.5px;height:16.349999999999998px;background:#fff"></div>
<div class="t" style="left:24px;top:245.29999999999995px;width:45px;overflow:hidden;font-size:7px;color:#34373b">ショッピングアプリ</div>
<div class="t" style="left:142.5px;top:245.59999999999997px;font-size:7.6px;color:#34373b">2025/08/12</div>
<div class="t" style="left:190px;top:245.29999999999995px;width:53px;overflow:hidden;font-size:7px;color:#34373b">節約ママ</div>
<div class="t" style="left:248px;top:245.29999999999995px;width:109px;overflow:hidden;font-size:7px;color:#34373b">クーポン情報が満載で、お得に買</div>
<div class="t" style="left:410px;top:245.29999999999995px;width:53px;overflow:hidden;font-size:7px;color:#34373b">ショッピング</div>
<div class="t" style="left:467.5px;top:245.29999999999995px;font-size:7px;color:#34373b">プラス</div>
<div class="a" style="left:376.6px;top:244.77499999999995px;width:8.5px;height:8.5px;background:#3c4043;border-radius:1.5px"></div>
<svg style="left:377.8px;top:245.87499999999994px" width="6.2" height="6.2" viewBox="0 0 24 24"><path d="M3 12 L9.5 18 L21 5" fill="none" stroke="#fff" stroke-width="3"/></svg>
<div class="a" style="left:19.5px;top:256.95px;width:483.5px;height:16.349999999999998px;background:#f6f7f9"></div>
<div class="t" style="left:24px;top:261.45px;width:45px;overflow:hidden;font-size:7px;color:#34373b">音楽ストリーミング</div>
<div class="t" style="left:142.5px;top:261.75px;font-size:7.6px;color:#34373b">2025/08/09</div>
<div class="t" style="left:190px;top:261.45px;width:53px;overflow:hidden;font-size:7px;color:#34373b">ミュージック</div>
<div class="t" style="left:248px;top:261.45px;width:109px;overflow:hidden;font-size:7px;color:#34373b">好きな音楽が高音質で聴けて最高</div>
<div class="t" style="left:410px;top:261.45px;width:53px;overflow:hidden;font-size:7px;color:#34373b">音楽</div>
<div class="t" style="left:467.5px;top:261.45px;font-size:7px;color:#34373b">プラス</div>
<div class="a" style="left:376.6px;top:260.92499999999995px;width:8.5px;height:8.5px;background:#3c4043;border-radius:1.5px"></div>
<svg style="left:377.8px;top:262.025px" width="6.2" height="6.2" viewBox="0 0 24 24"><path d="M3 12 L9.5 18 L21 5" fill="none" stroke="#fff" stroke-width="3"/></svg>
<div class="a" style="left:19.5px;top:273.09999999999997px;width:483.5px;height:16.349999999999998px;background:#fff"></div>
<div class="t" style="left:24px;top:277.59999999999997px;width:45px;overflow:hidden;font-size:7px;color:#34373b">防災アラート</div>
<div class="t" style="left:142.5px;top:277.9px;font-size:7.6px;color:#34373b">2025/08/05</div>
<div class="t" style="left:190px;top:277.59999999999997px;width:53px;overflow:hidden;font-size:7px;color:#34373b">安全太郎</div>
<div class="t" style="left:248px;top:277.59999999999997px;width:109px;overflow:hidden;font-size:7px;color:#34373b">いざという時に役立つ情報がたく</div>
<div class="t" style="left:410px;top:277.59999999999997px;width:53px;overflow:hidden;font-size:7px;color:#34373b">ユーティリティ</div>
<div class="t" style="left:467.5px;top:277.59999999999997px;font-size:7px;color:#34373b">プラス</div>
<div class="a" style="left:376.6px;top:277.07499999999993px;width:8.5px;height:8.5px;background:#3c4043;border-radius:1.5px"></div>
<svg style="left:377.8px;top:278.17499999999995px" width="6.2" height="6.2" viewBox="0 0 24 24"><path d="M3 12 L9.5 18 L21 5" fill="none" stroke="#fff" stroke-width="3"/></svg>
<div class="a" style="left:19px;top:47.5px;width:484.8px;height:242.25px;border:1px solid #8e90c9;border-top:none"></div>
<div class="a" style="left:19px;top:289.25px;width:609px;height:1px;background:#efefef"></div>
<div class="a" style="left:19px;top:300.58px;width:609px;height:1px;background:#efefef"></div>
<div class="a" style="left:19px;top:311.91px;width:609px;height:1px;background:#efefef"></div>
<div class="a" style="left:19px;top:323.24px;width:609px;height:1px;background:#efefef"></div>
<div class="a" style="left:19px;top:334.57px;width:609px;height:1px;background:#efefef"></div>
<div class="a" style="left:19px;top:345.9px;width:609px;height:1px;background:#efefef"></div>
<div class="a" style="left:19px;top:357.23px;width:609px;height:1px;background:#efefef"></div>
<div class="a" style="left:19px;top:368.56px;width:609px;height:1px;background:#efefef"></div>
<div class="a" style="left:19px;top:379.89px;width:609px;height:1px;background:#efefef"></div>
<div class="a" style="left:19px;top:391.22px;width:609px;height:1px;background:#efefef"></div>
<div class="a" style="left:19px;top:402.55px;width:609px;height:1px;background:#efefef"></div>
<div class="a" style="left:68.5px;top:289.25px;width:1px;height:200px;background:#efefef"></div>
<div class="a" style="left:131px;top:289.25px;width:1px;height:200px;background:#efefef"></div>
<div class="a" style="left:184px;top:289.25px;width:1px;height:200px;background:#efefef"></div>
<div class="a" style="left:243px;top:289.25px;width:1px;height:200px;background:#efefef"></div>
<div class="a" style="left:357px;top:289.25px;width:1px;height:200px;background:#efefef"></div>
<div class="a" style="left:405px;top:289.25px;width:1px;height:200px;background:#efefef"></div>
<div class="a" style="left:463px;top:289.25px;width:1px;height:200px;background:#efefef"></div>
<div class="a" style="left:503.5px;top:289.25px;width:1px;height:200px;background:#efefef"></div>
<div class="a" style="left:557.7px;top:289.25px;width:1px;height:200px;background:#efefef"></div>
<div class="a" style="left:612.5px;top:289.25px;width:1px;height:200px;background:#efefef"></div>
<div class="a" style="left:628px;top:289.25px;width:1px;height:200px;background:#efefef"></div>
<div class="a" style="left:503.5px;top:63.150000000000006px;width:124.5px;height:1px;background:#efefef"></div>
<div class="a" style="left:503.5px;top:79.3px;width:124.5px;height:1px;background:#efefef"></div>
<div class="a" style="left:503.5px;top:95.44999999999999px;width:124.5px;height:1px;background:#efefef"></div>
<div class="a" style="left:503.5px;top:111.6px;width:124.5px;height:1px;background:#efefef"></div>
<div class="a" style="left:503.5px;top:127.75px;width:124.5px;height:1px;background:#efefef"></div>
<div class="a" style="left:503.5px;top:143.89999999999998px;width:124.5px;height:1px;background:#efefef"></div>
<div class="a" style="left:503.5px;top:160.04999999999998px;width:124.5px;height:1px;background:#efefef"></div>
<div class="a" style="left:503.5px;top:176.2px;width:124.5px;height:1px;background:#efefef"></div>
<div class="a" style="left:503.5px;top:192.35px;width:124.5px;height:1px;background:#efefef"></div>
<div class="a" style="left:503.5px;top:208.5px;width:124.5px;height:1px;background:#efefef"></div>
<div class="a" style="left:503.5px;top:224.64999999999998px;width:124.5px;height:1px;background:#efefef"></div>
<div class="a" style="left:503.5px;top:240.79999999999995px;width:124.5px;height:1px;background:#efefef"></div>
<div class="a" style="left:503.5px;top:256.95px;width:124.5px;height:1px;background:#efefef"></div>
<div class="a" style="left:503.5px;top:273.09999999999997px;width:124.5px;height:1px;background:#efefef"></div>
<div class="a" style="left:503.5px;top:289.25px;width:124.5px;height:1px;background:#efefef"></div>
<div class="a" style="left:557.7px;top:47.0px;width:1px;height:242.25px;background:#efefef"></div>
<div class="a" style="left:612.5px;top:47.0px;width:1px;height:242.25px;background:#efefef"></div>
<div class="a" style="left:68px;top:47.0px;width:63.5px;height:344.5px;background:rgba(26,115,232,0.1);border-left:1px solid #7ba6ee;border-right:1px solid #7ba6ee"></div>
<div class="a" style="left:74px;top:50.775000000000006px;width:52.3px;height:8.6px;border-radius:4.3px;background:#16774f"></div>
<div class="t" style="left:110.2px;top:51.475px;font-size:7.5px;color:#e3f1e8">5</div>
<svg style="left:117.8px;top:54.075px" width="4.5" height="2.7" viewBox="0 0 10 6"><path d="M0 0 H10 L5 5.5 Z" fill="#e3f1e8"/></svg>
<div class="a" style="left:74px;top:66.92500000000001px;width:52.3px;height:8.6px;border-radius:4.3px;background:#c5e3c2"></div>
<div class="t" style="left:110.2px;top:67.62500000000001px;font-size:7.5px;color:#4f634e">3</div>
<svg style="left:117.8px;top:70.22500000000001px" width="4.5" height="2.7" viewBox="0 0 10 6"><path d="M0 0 H10 L5 5.5 Z" fill="#4f634e"/></svg>
<div class="a" style="left:74px;top:83.075px;width:52.3px;height:8.6px;border-radius:4.3px;background:#a2d06c"></div>
<div class="t" style="left:110.2px;top:83.775px;font-size:7.5px;color:#2a3a1c">4</div>
<svg style="left:117.8px;top:86.375px" width="4.5" height="2.7" viewBox="0 0 10 6"><path d="M0 0 H10 L5 5.5 Z" fill="#2a3a1c"/></svg>
<div class="a" style="left:74px;top:99.225px;width:52.3px;height:8.6px;border-radius:4.3px;background:#d4dcac"></div>
<div class="t" style="left:110.2px;top:99.925px;font-size:7.5px;color:#4a4d2c">2</div>
<svg style="left:117.8px;top:102.52499999999999px" width="4.5" height="2.7" viewBox="0 0 10 6"><path d="M0 0 H10 L5 5.5 Z" fill="#4a4d2c"/></svg>
<div class="a" style="left:74px;top:115.375px;width:52.3px;height:8.6px;border-radius:4.3px;background:#16774f"></div>
<div class="t" style="left:110.2px;top:116.075px;font-size:7.5px;color:#e3f1e8">5</div>
<svg style="left:117.8px;top:118.675px" width="4.5" height="2.7" viewBox="0 0 10 6"><path d="M0 0 H10 L5 5.5 Z" fill="#e3f1e8"/></svg>
<div class="a" style="left:74px;top:131.52499999999998px;width:52.3px;height:8.6px;border-radius:4.3px;background:#a2d06c"></div>
<div class="t" style="left:110.2px;top:132.225px;font-size:7.5px;color:#2a3a1c">4</div>
<svg style="left:117.8px;top:134.825px" width="4.5" height="2.7" viewBox="0 0 10 6"><path d="M0 0 H10 L5 5.5 Z" fill="#2a3a1c"/></svg>
<div class="a" style="left:74px;top:147.67499999999995px;width:52.3px;height:8.6px;border-radius:4.3px;background:#a2d06c"></div>
<div class="t" style="left:110.2px;top:148.37499999999997px;font-size:7.5px;color:#2a3a1c">4</div>
<svg style="left:117.8px;top:150.97499999999997px" width="4.5" height="2.7" viewBox="0 0 10 6"><path d="M0 0 H10 L5 5.5 Z" fill="#2a3a1c"/></svg>
<div class="a" style="left:74px;top:163.82499999999996px;width:52.3px;height:8.6px;border-radius:4.3px;background:#16774f"></div>
<div class="t" style="left:110.2px;top:164.52499999999998px;font-size:7.5px;color:#e3f1e8">5</div>
<svg style="left:117.8px;top:167.12499999999997px" width="4.5" height="2.7" viewBox="0 0 10 6"><path d="M0 0 H10 L5 5.5 Z" fill="#e3f1e8"/></svg>
<div class="a" style="left:74px;top:179.97499999999997px;width:52.3px;height:8.6px;border-radius:4.3px;background:#c5e3c2"></div>
<div class="t" style="left:110.2px;top:180.67499999999998px;font-size:7.5px;color:#4f634e">3</div>
<svg style="left:117.8px;top:183.27499999999998px" width="4.5" height="2.7" viewBox="0 0 10 6"><path d="M0 0 H10 L5 5.5 Z" fill="#4f634e"/></svg>
<div class="a" style="left:74px;top:196.12499999999997px;width:52.3px;height:8.6px;border-radius:4.3px;background:#a2d06c"></div>
<div class="t" style="left:110.2px;top:196.825px;font-size:7.5px;color:#2a3a1c">4</div>
<svg style="left:117.8px;top:199.42499999999998px" width="4.5" height="2.7" viewBox="0 0 10 6"><path d="M0 0 H10 L5 5.5 Z" fill="#2a3a1c"/></svg>
<div class="a" style="left:74px;top:212.27499999999998px;width:52.3px;height:8.6px;border-radius:4.3px;background:#16774f"></div>
<div class="t" style="left:110.2px;top:212.975px;font-size:7.5px;color:#e3f1e8">5</div>
<svg style="left:117.8px;top:215.575px" width="4.5" height="2.7" viewBox="0 0 10 6"><path d="M0 0 H10 L5 5.5 Z" fill="#e3f1e8"/></svg>
<div class="a" style="left:74px;top:228.42499999999995px;width:52.3px;height:8.6px;border-radius:4.3px;background:#c5e3c2"></div>
<div class="t" style="left:110.2px;top:229.12499999999997px;font-size:7.5px;color:#4f634e">3</div>
<svg style="left:117.8px;top:231.72499999999997px" width="4.5" height="2.7" viewBox="0 0 10 6"><path d="M0 0 H10 L5 5.5 Z" fill="#4f634e"/></svg>
<div class="a" style="left:74px;top:244.57499999999993px;width:52.3px;height:8.6px;border-radius:4.3px;background:#a2d06c"></div>
<div class="t" style="left:110.2px;top:245.27499999999995px;font-size:7.5px;color:#2a3a1c">4</div>
<svg style="left:117.8px;top:247.87499999999994px" width="4.5" height="2.7" viewBox="0 0 10 6"><path d="M0 0 H10 L5 5.5 Z" fill="#2a3a1c"/></svg>
<div class="a" style="left:74px;top:260.72499999999997px;width:52.3px;height:8.6px;border-radius:4.3px;background:#16774f"></div>
<div class="t" style="left:110.2px;top:261.42499999999995px;font-size:7.5px;color:#e3f1e8">5</div>
<svg style="left:117.8px;top:264.025px" width="4.5" height="2.7" viewBox="0 0 10 6"><path d="M0 0 H10 L5 5.5 Z" fill="#e3f1e8"/></svg>
<div class="a" style="left:74px;top:276.87499999999994px;width:52.3px;height:8.6px;border-radius:4.3px;background:#16774f"></div>
<div class="t" style="left:110.2px;top:277.57499999999993px;font-size:7.5px;color:#e3f1e8">5</div>
<svg style="left:117.8px;top:280.17499999999995px" width="4.5" height="2.7" viewBox="0 0 10 6"><path d="M0 0 H10 L5 5.5 Z" fill="#e3f1e8"/></svg>
<div class="a" style="left:68.5px;top:47.0px;width:63px;height:16.15px;border:1.5px solid #4d88ea"></div>
</div>
<div class="a" style="left:628px;top:44.5px;width:6px;height:12.5px;background:#fff;border-bottom:1px solid #c9cbcf"></div>
<div class="a" style="left:628px;top:57px;width:6px;height:379px;background:#fafbfc;border-left:1px solid #eeeeee"></div>
<div class="a" style="left:628px;top:89.6px;width:6px;height:2.5px;background:#c6c8cb"></div>
<div class="a" style="left:629px;top:93px;width:4.5px;height:13px;border-radius:2.5px;background:#dadce0"></div>
<div class="a" style="left:649.5px;top:3px;width:380px;height:440px;background:#fff;border:1px solid #e9ebee;border-radius:10px 0 0 0"></div>
<svg style="left:659.3px;top:12px" width="9" height="9" viewBox="0 0 24 24"><path d="M12 0 Q15.2 8.8 24 12 Q15.2 15.2 12 24 Q8.8 15.2 0 12 Q8.8 8.8 12 0 Z" fill="#1f2a22"/></svg>
<div class="t" style="left:673.5px;top:12px;font-size:9px;color:#1f1f1f">Gemini</div>
<div class="a" style="left:979.5px;top:13px;width:1.8px;height:1.8px;background:#444;border-radius:1px;box-shadow:0 3px 0 #444,0 6px 0 #444"></div>
<svg style="left:993.5px;top:12px" width="8" height="8" viewBox="0 0 24 24"><path d="M14 2 V10 H22 M10 22 V14 H2" fill="none" stroke="#444" stroke-width="2.6"/></svg>
<svg style="left:1010.8px;top:12px" width="8" height="8" viewBox="0 0 24 24"><path d="M4 4 L20 20 M20 4 L4 20" fill="none" stroke="#444" stroke-width="3.2"/></svg>
<div class="a" style="left:651px;top:29px;width:373px;height:1px;background:#eceef1"></div>
<div class="a" style="left:651px;top:30px;width:373px;height:336px;overflow:hidden">
<div class="a" style="left:16px;top:-3px;width:197px;height:16px;border-radius:5px;background:#edf1f8"></div>
<svg style="left:21.5px;top:3.299999999999997px" width="6.1" height="5.8" viewBox="0 0 12 12"><rect width="12" height="12" rx="2" fill="#4285f4"/><path d="M3.5 3.5 H8.5 M3.5 6 H8.5 M3.5 8.5 H7" stroke="#d6e6ff" stroke-width="1.3"/></svg>
<div class="t" style="left:31px;top:1.75px;font-size:8px;color:#3c4043;transform:scale(0.917,1.0);transform-origin:0 50%;">Gemini エクスポート 2025年9月29日 17:17:53 UTC+9</div>
<div class="t" style="left:215.5px;top:1.25px;font-size:9px;color:#3c4043;transform:scale(0.944,0.944);transform-origin:0 50%;">が作成され、以下に追加されました:</div>
<div class="a" style="left:16px;top:14px;width:64px;height:14px;border-radius:5px;background:#edf1f8"></div>
<svg style="left:21.200000000000045px;top:17.799999999999997px" width="7.6" height="5.6" viewBox="0 0 16 12"><path d="M1 1 H6 L7.5 2.5 H15 V11 H1 Z" fill="none" stroke="#444" stroke-width="1.7"/><rect x="8.5" y="5" width="5" height="4" fill="#444"/></svg>
<div class="t" style="left:32.299999999999955px;top:16.799999999999997px;font-size:8px;color:#3c4043;transform:scale(0.94,1.0);transform-origin:0 50%;">マイドライブ</div>
<div class="a" style="left:130.29999999999995px;top:40.2px;width:228px;height:27.2px;background:#e9ecf5;border:2.2px solid #e0040f"></div>
<div class="t" style="left:136.70000000000005px;top:50.7px;font-size:9px;color:#3c4043;transform:scale(0.93,0.93);transform-origin:0 50%;">レビュースコアの円グラフ作ってほしい</div>
<svg style="left:17.200000000000045px;top:84.3px" width="10.4" height="10.4" viewBox="0 0 24 24"><path d="M12 0 Q15.2 8.8 24 12 Q15.2 15.2 12 24 Q8.8 15.2 0 12 Q8.8 8.8 12 0 Z" fill="#2a78ea"/></svg>
<svg style="left:17.5px;top:105.80000000000001px" width="5.5" height="3.3" viewBox="0 0 10 6"><path d="M1 1 L5 5 L9 1" fill="none" stroke="#3f78b3" stroke-width="2.4"/></svg>
<div class="t" style="left:31.399999999999977px;top:104.0px;font-size:7px;color:#3f78b3;transform:scale(0.91,0.91);transform-origin:0 50%;font-weight:bold">分析ステップ</div>
<div class="a" style="left:16px;top:121px;width:342.7px;height:260px;border-radius:7px;background:#f0f3f8"></div>
<div class="t" style="left:36.5px;top:139.5px;font-size:9px;color:#4a4a4a;transform:scale(0.938,0.938);transform-origin:0 50%;">レビュースコアの分布</div>
<svg style="left:100.4px;top:155.50000000000003px" width="175.2" height="175.2" viewBox="-87.6 -87.6 175.2 175.2"><path d="M0 0 L0.00 -87.60 A87.6 87.6 0 0 1 35.63 -80.03 Z" fill="#4285f4" stroke="none"/><path d="M0 0 L35.63 -80.03 A87.6 87.6 0 0 1 87.12 9.16 Z" fill="#db4437" stroke="none"/><path d="M0 0 L87.12 9.16 A87.6 87.6 0 0 1 -51.49 70.87 Z" fill="#f4b400" stroke="none"/><path d="M0 0 L-51.49 70.87 A87.6 87.6 0 0 1 -0.00 -87.60 Z" fill="#0f9d58" stroke="none"/></svg>
<div class="a" style="left:206px;top:163.1px;width:134.5px;height:1px;background:#b3b6ba"></div>
<div class="a" style="left:205px;top:162.6px;width:2px;height:2px;border-radius:1px;background:#8a8f95"></div>
<div class="t" style="left:300.5px;width:40px;text-align:right;top:156.6px;font-size:6.5px;color:#5f6368">2</div>
<div class="t" style="left:300.5px;width:40px;text-align:right;top:165.1px;font-size:6.2px;color:#80868b;transform:scaleX(0.93);transform-origin:100% 0">6.7%</div>
<div class="a" style="left:260px;top:201.4px;width:80.5px;height:1px;background:#b3b6ba"></div>
<div class="a" style="left:259px;top:200.9px;width:2px;height:2px;border-radius:1px;background:#8a8f95"></div>
<div class="t" style="left:300.5px;width:40px;text-align:right;top:194.9px;font-size:6.5px;color:#5f6368">3</div>
<div class="t" style="left:300.5px;width:40px;text-align:right;top:203.4px;font-size:6.2px;color:#80868b;transform:scaleX(0.93);transform-origin:100% 0">20.0%</div>
<div class="a" style="left:35px;top:216.8px;width:75px;height:1px;background:#b3b6ba"></div>
<div class="a" style="left:109px;top:216.3px;width:2px;height:2px;border-radius:1px;background:#8a8f95"></div>
<div class="t" style="left:35px;top:210.3px;font-size:6.5px;color:#5f6368">5</div>
<div class="t" style="left:35px;top:218.8px;font-size:6.2px;color:#80868b;transform:scaleX(0.93);transform-origin:0 0">40.0%</div>
<div class="a" style="left:221px;top:318.3px;width:119.5px;height:1px;background:#b3b6ba"></div>
<div class="a" style="left:220px;top:317.8px;width:2px;height:2px;border-radius:1px;background:#8a8f95"></div>
<div class="t" style="left:300.5px;width:40px;text-align:right;top:311.8px;font-size:6.5px;color:#5f6368">4</div>
<div class="t" style="left:300.5px;width:40px;text-align:right;top:320.3px;font-size:6.2px;color:#80868b;transform:scaleX(0.93);transform-origin:100% 0">33.3%</div>
</div>
<div class="a" style="left:649.5px;top:366px;width:380px;height:80px;background:#fff;border:1px solid #e8eaed;border-radius:10px 0 0 0;box-shadow:0 -1px 2px rgba(0,0,0,0.03)"></div>
<div class="a" style="left:667px;top:375.5px;width:343.5px;height:49.5px;border-radius:9px;background:#f0f4f9"></div>
<div class="t" style="left:676.3px;top:384.0px;font-size:9px;color:#5f6368;transform:scale(0.938,0.938);transform-origin:0 50%;">ここにプロンプトを入力</div>
<div class="a" style="left:675.5px;top:401px;width:61.5px;height:17.5px;border-radius:5px;background:#f8fafd;border:1px solid #c7cbd1"></div>
<svg style="left:682px;top:406.3px" width="7.5" height="7.6" viewBox="0 0 15 15"><rect x="0" y="0" width="15" height="15" rx="1.5" fill="#1e8e3e"/><path d="M0 5 H15 M0 10 H15 M7.5 0 V15" stroke="#cfe8d5" stroke-width="1.3"/></svg>
<div class="t" style="left:696px;top:407.3px;font-size:7px;color:#3c4043;transform:scale(1.0,1.0);transform-origin:0 50%;">表_1 (B:B)</div>
<div class="t" style="left:681px;top:431.5px;font-size:7px;color:#b8bcc2;transform:scaleX(0.99);transform-origin:0 0">Gemini は不正確な情報を表示することがあるため、生成された回答を再確認するようにしてください。</div>
<div class="a" style="left:1020.5px;top:295.5px;width:4px;height:45px;border-radius:2px 0 0 2px;background:#dadce0"></div>
</body></html>
